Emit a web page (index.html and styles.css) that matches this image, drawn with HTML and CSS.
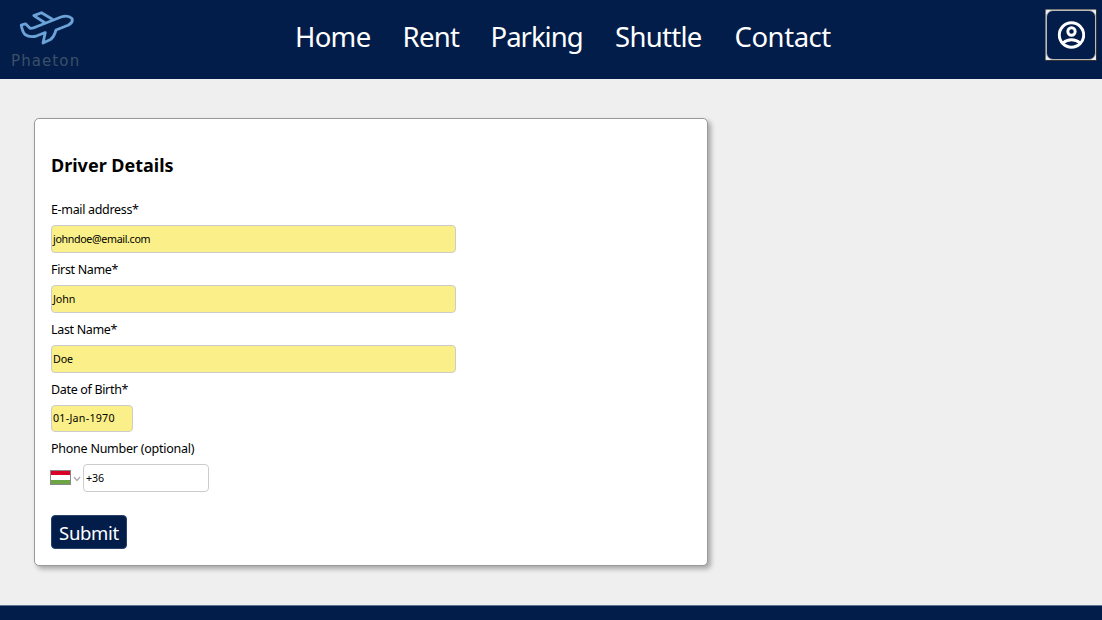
FILE: index.html
```html
<!DOCTYPE html>
<html lang="en">
<head>
<meta charset="utf-8">
<title>Phaeton</title>
<link rel="stylesheet" href="styles.css">
</head>
<body>
<header class="header">
  <a class="logo">
    <svg class="logo-plane" width="60" height="38" viewBox="0 0 60 38" fill="none" stroke="#6ba3d8" stroke-width="2.8" stroke-linejoin="round" stroke-linecap="round">
      <path d="M6.200 17 L10.500 15.800 L15 20.300 Q18 20.500 22 18.500 L46 9 Q53 6.500 57 10.500 Q58.500 14.500 53 17.300 L41 22 Q39 29 35.500 31.500 L28 35 L30.300 24.500 L22 27.800 Q15 30 10 26.500 Q7.500 24 6.200 17 Z"/>
      <path d="M29.500 14.500 L18.800 7.600 L26.500 4.700 L37 11"/>
    </svg>
    <span class="logo-text">Phaeton</span>
  </a>
  <nav class="nav">
    <a class="nav-link">Home</a>
    <a class="nav-link">Rent</a>
    <a class="nav-link parking">Parking</a>
    <a class="nav-link">Shuttle</a>
    <a class="nav-link contact">Contact</a>
  </nav>
  <button class="account" aria-label="Account">
    <span class="account-face">
      <svg width="28" height="28" viewBox="0 0 28 28" fill="none" stroke="#fff" stroke-width="2.900">
        <circle cx="14.500" cy="14" r="12.200"/>
        <circle cx="14.500" cy="10.500" r="3.700"/>
        <path d="M6 22 Q9.500 18.800 14.500 18.800 Q19.500 18.800 23 22"/>
      </svg>
    </span>
  </button>
</header>
<main class="main">
  <form class="card">
    <h1 class="title">Driver Details</h1>
    <label class="label">E-mail address*</label>
    <div class="input input-email">johndoe@email.com</div>
    <label class="label">First Name*</label>
    <div class="input">John</div>
    <label class="label">Last Name*</label>
    <div class="input">Doe</div>
    <label class="label">Date of Birth*</label>
    <div class="input input-date">01-Jan-1970</div>
    <label class="label label-phone">Phone Number (optional)</label>
    <div class="phone">
      <span class="flag"></span>
      <svg class="chevron" width="8" height="6" viewBox="0 0 8 6" fill="none" stroke="#aaa" stroke-width="1.200"><path d="M1 1 L4 4.500 L7 1"/></svg>
      <div class="input input-phone">+36</div>
    </div>
    <button class="submit" type="button">Submit</button>
  </form>
</main>
<footer class="footer"></footer>
</body>
</html>
```
FILE: styles.css
```css
* { box-sizing: border-box; }
body {
  margin: 0;
  height: 620px;
  display: flex;
  flex-direction: column;
  overflow: hidden;
  background: #efefef;
  color: #000;
  font-family: "Noto Sans", "Open Sans", sans-serif;
}
.header {
  height: 79px;
  display: flex;
  background: #021d49;
}
.logo {
  width: 295px;
  padding: 8px 0 0 11px;
  display: flex;
  flex-direction: column;
}
.logo-plane { margin-left: 4px; }
.logo-text {
  margin-top: 5px;
  font: 15px/20px "DejaVu Sans", sans-serif;
  letter-spacing: 1.1px;
  color: #3a5068;
}
.nav {
  width: 750px;
  display: grid;
  grid-template-columns: 107.5px 88px 124.500px 119.500px auto;
}
.nav-link {
  color: #fff;
  font-size: 27.500px;
  line-height: 74px;
  letter-spacing: -0.7px;
  white-space: nowrap;
}
.parking { letter-spacing: -1px; }
.contact { letter-spacing: -0.45px; }
.account {
  width: 52px;
  height: 52px;
  margin: 9px 0 0;
  padding: 0;
  border: 1px solid;
  border-color: #777 #333 #333 #777;
  border-radius: 2px;
  background: #eee;
}
.account-face {
  height: 100%;
  display: flex;
  align-items: center;
  justify-content: center;
  border: 1px solid #bbb;
  border-radius: 7px;
  background: #021d49;
}
.main {
  height: 526px;
  padding: 39px 0 0 34px;
}
.card {
  width: 674px;
  height: 448px;
  padding: 31px 16px 0;
  border: 1px solid #999;
  border-radius: 5px;
  background: #fff;
  box-shadow: 3px 3px 5px rgba(0, 0, 0, 0.3);
}
.title {
  margin: 0 0 13px;
  font-size: 18px;
  line-height: 30px;
  font-weight: 700;
}
.label {
  display: block;
  height: 32px;
  font-size: 12.500px;
  line-height: 34px;
  letter-spacing: -0.33px;
}
.label-phone { letter-spacing: -0.25px; }
.input {
  width: 405px;
  height: 28px;
  padding-left: 1px;
  border: 1px solid #ccc;
  border-radius: 4px;
  background: #faef88;
  font-size: 10.700px;
  line-height: 26px;
  letter-spacing: -0.1px;
  white-space: nowrap;
}
.input-email { letter-spacing: -0.35px; }
.input-date {
  width: 82px;
  height: 26.500px;
  line-height: 24px;
  letter-spacing: 0.25px;
}
.phone {
  display: flex;
  align-items: center;
  margin-left: -1px;
}
.flag {
  width: 21px;
  height: 15px;
  border: 1px solid #888;
  background: linear-gradient(#d80027 33%, #fff 33% 66%, #6da544 66%);
}
.chevron { margin: 2px 2px 0; }
.input-phone {
  width: 126px;
  padding-left: 2px;
  background: #fff;
}
.submit {
  width: 76px;
  height: 34px;
  margin-top: 23px;
  padding: 1px 0 0;
  border: 1px solid #2b4469;
  border-radius: 4px;
  background: #021d49;
  color: #fff;
  font: 18.500px/32px "Noto Sans", sans-serif;
  letter-spacing: -0.3px;
}
.footer {
  height: 15px;
  border-top: 1px solid #617391;
  background: #021d49;
}
```
